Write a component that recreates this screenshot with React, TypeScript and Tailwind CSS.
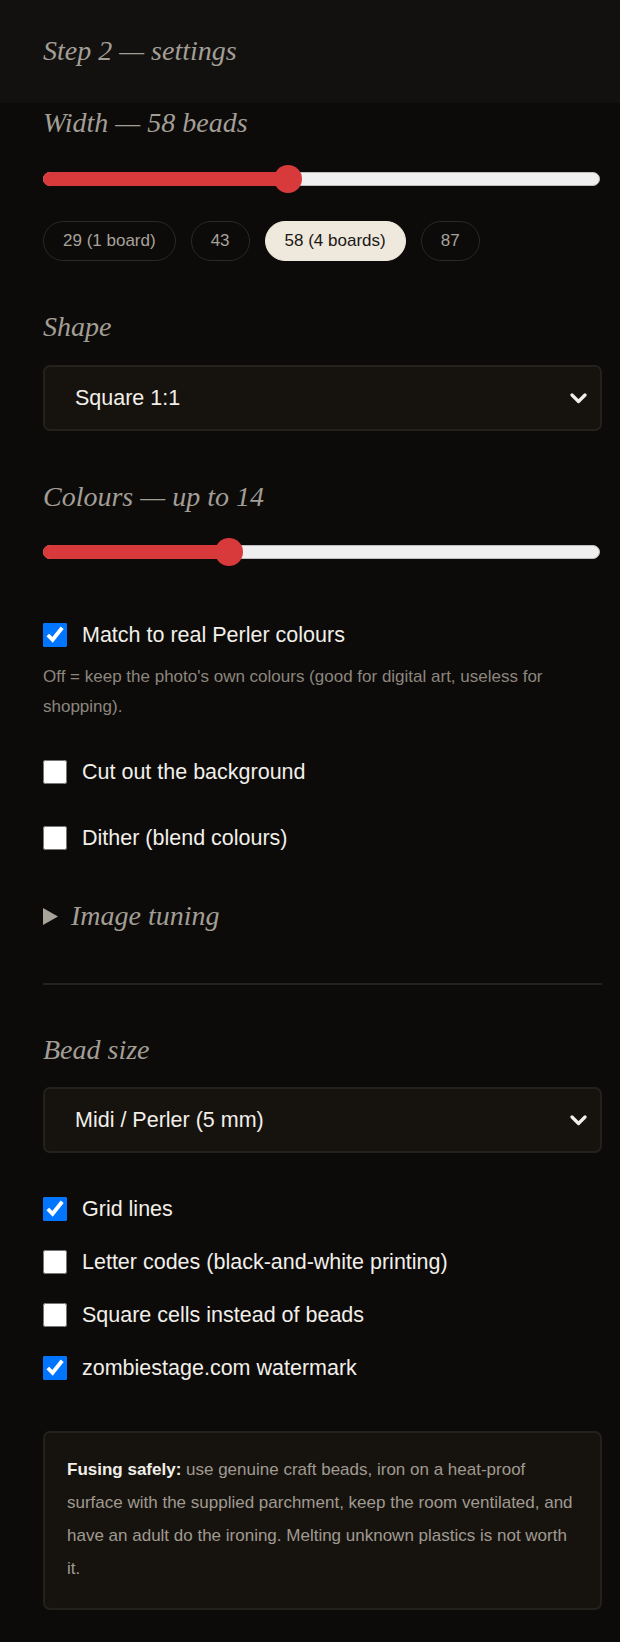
import React from "react";

const serif = "font-['Liberation_Serif',serif] italic text-[28px] leading-[32px] text-[#a39e95]";
const sans = "font-['Liberation_Sans','Arial',sans-serif]";

type SliderProps = { value: number; min: number; max: number };

function Slider({ value, min, max }: SliderProps) {
  const pct = ((value - min) / (max - min)) * 100;
  return (
    <div className="relative h-[28px] mr-[2px]">
      <div className="absolute left-0 right-0 top-[7px] h-[14px] rounded-full bg-[#efefef] border border-[#bdbdbd]" />
      <div
        className="absolute left-0 top-[7px] h-[14px] rounded-l-full bg-[#d8393b]"
        style={{ width: `calc(14px + (100% - 28px) * ${pct / 100})` }}
      />
      <div
        className="absolute top-0 h-[28px] w-[28px] rounded-full bg-[#d8393b]"
        style={{ left: `calc((100% - 28px) * ${pct / 100})` }}
      />
    </div>
  );
}

function Chevron() {
  return (
    <svg width="17" height="12" viewBox="0 0 17 12" className="shrink-0">
      <polyline points="2,3 8.5,9.5 15,3" fill="none" stroke="#f2efe9" strokeWidth="3.2" strokeLinecap="round" strokeLinejoin="round" />
    </svg>
  );
}

function Select({ value }: { value: string }) {
  return (
    <div className="h-[66px] rounded-[7px] border-2 border-[#24211d] bg-[#16130f] flex items-center pl-[30px] pr-[13px]">
      <span className="flex-1 text-[21.5px] text-[#f2efe9]">{value}</span>
      <Chevron />
    </div>
  );
}

function Check({ label, checked }: { label: string; checked?: boolean }) {
  return (
    <label className="flex items-center gap-[15px] h-[32px]">
      <input type="checkbox" defaultChecked={checked} className="w-[24px] h-[24px] m-0 shrink-0" />
      <span className="text-[21.5px] text-[#f2efe9] leading-[32px]">{label}</span>
    </label>
  );
}

const chips = [
  { label: "29 (1 board)", active: false },
  { label: "43", active: false },
  { label: "58 (4 boards)", active: true },
  { label: "87", active: false },
];

export default function App() {
  return (
    <div className={`min-h-screen bg-[#0c0b0a] ${sans}`}>
      <div className="h-[103px] bg-[#121110] pl-[43px] pt-[35px]">
        <h2 className={serif}>Step 2 — settings</h2>
      </div>

      <div className="pl-[43px] pr-[18px] pb-[31px]">
        <div className={`${serif} mt-[4px]`}>Width — 58 beads</div>
        <div className="mt-[26px]">
          <Slider value={58} min={10} max={120} />
        </div>
        <div className="mt-[28px] flex gap-[15px]">
          {chips.map((c) => (
            <button
              key={c.label}
              className={`h-[40px] px-[19px] rounded-full border text-[17px] ${
                c.active
                  ? "bg-[#efe8dc] border-[#efe8dc] text-[#1a1715]"
                  : "border-[#2b2825] text-[#a8a29a]"
              }`}
            >
              {c.label}
            </button>
          ))}
        </div>

        <div className={`${serif} mt-[50px]`}>Shape</div>
        <div className="mt-[22px]">
          <Select value="Square 1:1" />
        </div>

        <div className={`${serif} mt-[50px]`}>Colours — up to 14</div>
        <div className="mt-[25px]">
          <Slider value={14} min={2} max={39} />
        </div>

        <div className="mt-[53px]">
          <Check label="Match to real Perler colours" checked />
        </div>
        <p className="mt-[11px] text-[17px] leading-[30px] text-[#8c867d]">
          Off = keep the photo's own colours (good for digital art, useless for shopping).
        </p>
        <div className="mt-[34px]">
          <Check label="Cut out the background" />
        </div>
        <div className="mt-[34px]">
          <Check label="Dither (blend colours)" />
        </div>

        <div className="mt-[46px] flex items-center gap-[13px]">
          <svg width="15" height="17" viewBox="0 0 15 17" className="shrink-0">
            <polygon points="0,0 15,8.5 0,17" fill="#a8a29a" />
          </svg>
          <span className={serif}>Image tuning</span>
        </div>

        <div className="mt-[51px] h-[2px] bg-[#24211f]" />

        <div className={`${serif} mt-[49px]`}>Bead size</div>
        <div className="mt-[21px]">
          <Select value="Midi / Perler (5 mm)" />
        </div>

        <div className="mt-[40px] flex flex-col gap-[21px]">
          <Check label="Grid lines" checked />
          <Check label="Letter codes (black-and-white printing)" />
          <Check label="Square cells instead of beads" />
          <Check label="zombiestage.com watermark" checked />
        </div>

        <div className="mt-[47px] rounded-[7px] border-2 border-[#24211d] bg-[#16130f] px-[22px] pt-[20px] pb-[23px]">
          <p className="text-[17px] leading-[33px] text-[#a09a90]">
            <strong className="font-bold text-[#f2efe9]">Fusing safely:</strong> use genuine craft
            beads, iron on a heat-proof surface with the supplied parchment, keep the room
            ventilated, and have an adult do the ironing. Melting unknown plastics is not worth it.
          </p>
        </div>
      </div>
    </div>
  );
}
